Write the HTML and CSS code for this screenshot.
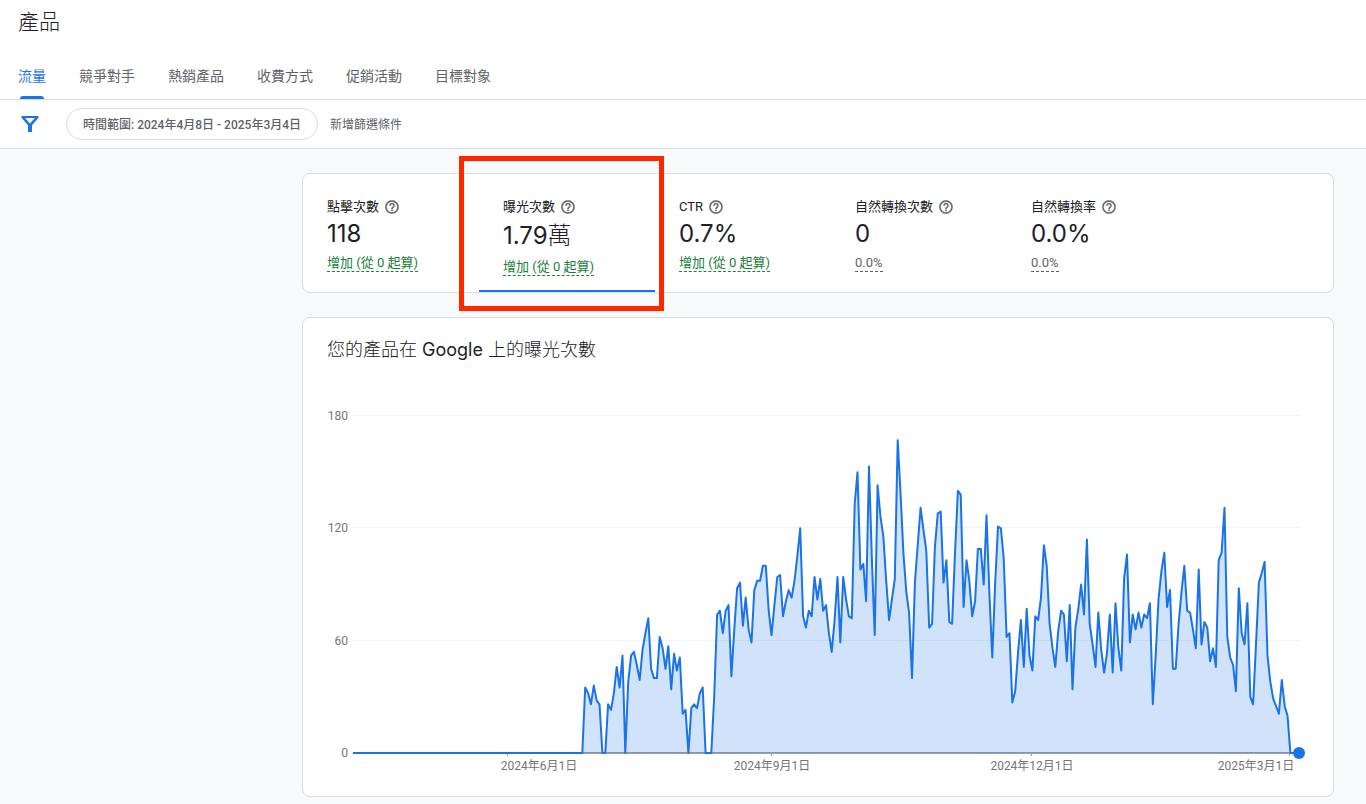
FILE: index.html
```
<!DOCTYPE html>
<html lang="zh-Hant">
<head>
    <meta charset="utf-8">
    <meta name="viewport" content="width=device-width, initial-scale=1">
    <title>產品</title>
    <link rel="stylesheet" href="styles.css">
</head>
<body>
    <svg class="icon-defs" aria-hidden="true">
        <symbol id="help" viewBox="0 0 24 24">
            <path d="M11 18h2v-2h-2v2zm1-16C6.48 2 2 6.48 2 12s4.48 10 10 10 10-4.48 10-10S17.52 2 12 2zm0 18c-4.41 0-8-3.59-8-8s3.59-8 8-8 8 3.59 8 8-3.59 8-8 8zm0-14c-2.21 0-4 1.79-4 4h2c0-1.1.9-2 2-2s2 .9 2 2c0 2-3 1.75-3 5h2c0-2.25 3-2.5 3-5 0-2.21-1.79-4-4-4z"/>
        </symbol>
    </svg>

    <header class="page-header">
        <h1>產品</h1>
        <nav class="tabs">
            <a class="tab active" href="#traffic" aria-current="page">流量</a>
            <a class="tab" href="#competitors">競爭對手</a>
            <a class="tab" href="#popular">熱銷產品</a>
            <a class="tab" href="#pricing">收費方式</a>
            <a class="tab" href="#promotions">促銷活動</a>
            <a class="tab" href="#audience">目標對象</a>
        </nav>
        <div class="filter-bar">
            <svg class="filter-icon" viewBox="0 0 18 18" aria-hidden="true">
                <path fill-rule="evenodd" d="M.5 1h17v1.8L11 10.2V17H7v-6.8L.5 2.8V1zm3.6 2L9 8.6 13.9 3H4.1z"/>
            </svg>
            <button class="chip" type="button">時間範圍: 2024年4月8日 - 2025年3月4日</button>
            <button class="add-filter" type="button">新增篩選條件</button>
        </div>
    </header>

    <main>
        <section class="card metrics">
            <button class="metric" type="button">
                <span class="metric-label">點擊次數 <svg class="help-icon"><use href="#help"/></svg></span>
                <span class="metric-value">118</span>
                <span class="metric-change up">增加 (從 0 起算)</span>
            </button>
            <button class="metric selected" type="button" aria-pressed="true">
                <span class="metric-label">曝光次數 <svg class="help-icon"><use href="#help"/></svg></span>
                <span class="metric-value with-unit">1.79<span class="unit">萬</span></span>
                <span class="metric-change up">增加 (從 0 起算)</span>
                <span class="highlight"></span>
            </button>
            <button class="metric" type="button">
                <span class="metric-label">CTR <svg class="help-icon"><use href="#help"/></svg></span>
                <span class="metric-value">0.7%</span>
                <span class="metric-change up">增加 (從 0 起算)</span>
            </button>
            <button class="metric" type="button">
                <span class="metric-label">自然轉換次數 <svg class="help-icon"><use href="#help"/></svg></span>
                <span class="metric-value">0</span>
                <span class="metric-change">0.0%</span>
            </button>
            <button class="metric" type="button">
                <span class="metric-label">自然轉換率 <svg class="help-icon"><use href="#help"/></svg></span>
                <span class="metric-value">0.0%</span>
                <span class="metric-change">0.0%</span>
            </button>
        </section>

        <section class="card chart-card">
            <h2>您的產品在 <span class="brand">Google</span> 上的曝光次數</h2>
            <svg id="chart" class="chart" role="img" aria-label="曝光次數"></svg>
        </section>
    </main>

    <script src="chart.js"></script>
</body>
</html>
```
FILE: styles.css
```
* {
    box-sizing: border-box;
}
body {
    margin: 0;
    background-color: #f8f9fa;
    color: #202124;
    font-family: Roboto, "Noto Sans CJK TC", sans-serif;
    font-size: 13px;
}
button {
    border: none;
    background: none;
    color: inherit;
    font-family: inherit;
    cursor: pointer;
}
.icon-defs {
    display: none;
}

/* Header */
.page-header {
    background-color: #fff;
}
h1 {
    margin: 0;
    padding: 6px 18px 0;
    font-size: 21px;
    font-weight: 300;
    line-height: 32px;
}
.tabs {
    display: flex;
    gap: 33px;
    margin-top: 14px;
    padding: 0 18px;
    border-bottom: 1px solid #dadce0;
}
.tab {
    display: flex;
    flex-direction: column;
    align-items: center;
    height: 47px;
    color: #5f6368;
    font-size: 14px;
    line-height: 48px;
    text-decoration: none;
}
.tab.active {
    color: #1a73e8;
}
.tab.active::after {
    content: "";
    width: 24px;
    height: 3px;
    margin-top: -4px;
    border-radius: 3px 3px 0 0;
    background-color: #1a73e8;
}
.filter-bar {
    display: flex;
    align-items: center;
    height: 49px;
    padding: 0 21px;
    border-bottom: 1px solid #dadce0;
    color: #5f6368;
}
.filter-icon {
    width: 18px;
    height: 18px;
    margin-right: 27px;
    fill: #1a73e8;
}
.chip {
    height: 32px;
    padding: 0 16px 2px;
    border: 1px solid #dadce0;
    border-radius: 16px;
    font-size: 12px;
    font-weight: 500;
}
.add-filter {
    padding: 0 12px 2px;
    font-size: 12px;
}

/* Cards */
main {
    display: flex;
    flex-direction: column;
    gap: 24px;
    padding: 24px 32px 0 302px;
}
.card {
    border: 1px solid #dadce0;
    border-radius: 8px;
    background-color: #fff;
}
.metrics {
    display: flex;
}
.metric {
    position: relative;
    display: flex;
    flex-direction: column;
    align-items: flex-start;
    flex: 0 1 176px;
    height: 118px;
    padding: 24px 0 0 24px;
    text-align: left;
    white-space: nowrap;
}
.metric.selected {
    border-bottom: 2px solid #1a73e8;
}
.metric-label {
    display: flex;
    align-items: center;
    gap: 5px;
    font-size: 13px;
    line-height: 18px;
}
.help-icon {
    width: 16px;
    height: 16px;
    fill: #5f6368;
    stroke: #5f6368;
    stroke-width: 0.4px;
}
.metric-value {
    font-family: Inter, "Noto Sans CJK TC", sans-serif;
    font-size: 24px;
    line-height: 36px;
}
.metric-value.with-unit {
    line-height: 40px;
}
.unit {
    font-weight: 300;
}
.metric-change {
    margin-top: 2px;
    border-bottom: 1px dashed #5f6368;
    color: #5f6368;
    font-size: 13px;
    line-height: 17px;
}
.metric-change.up {
    border-color: #188038;
    color: #188038;
}
.highlight {
    position: absolute;
    top: -18px;
    right: -9px;
    bottom: -21px;
    left: -20px;
    border: 5px solid #ff2600;
    pointer-events: none;
}

/* Chart */
.chart-card {
    padding: 21px 24px 24px;
}
h2 {
    margin: 0 0 23px;
    font-family: Inter, "Noto Sans CJK TC", sans-serif;
    font-size: 18px;
    font-weight: 300;
    line-height: 22px;
}
.brand {
    font-weight: 400;
}
.chart {
    display: block;
    width: 100%;
    height: 388px;
    overflow: visible;
}
.chart text {
    fill: #757575;
    font-size: 12px;
}
.grid-line {
    stroke: #f1f3f4;
}
.base-line {
    stroke: #9aa0a6;
    stroke-width: 2;
}
.tick {
    stroke: #9aa0a6;
}
.area {
    fill: #1a73e8;
    fill-opacity: 0.2;
}
.line {
    fill: none;
    stroke: #1a73e8;
    stroke-width: 2;
    stroke-linejoin: round;
}
.end-point {
    fill: #1a73e8;
}
```
FILE: chart.js
```
// Daily impressions, 2024-04-08 to 2025-03-04. The first 81 days are all zero.
const values = new Array(81).fill(0).concat([
    35, 32, 26, 36, 28, 26, 0, 0, 26,
    23, 32, 46, 35, 52, 0, 38, 52, 54, 47,
    39, 55, 64, 72, 45, 40, 40, 62, 56, 45,
    57, 34, 53, 44, 51, 21, 23, 0, 24, 26,
    24, 32, 35, 0, 0, 0, 30, 74, 76, 64,
    76, 79, 41, 66, 88, 91, 68, 83, 66, 59,
    87, 92, 92, 100, 100, 76, 63, 79, 94, 95,
    73, 81, 87, 83, 92, 105, 120, 73, 67, 76,
    73, 94, 82, 93, 76, 79, 64, 54, 71, 94,
    59, 94, 82, 73, 72, 133, 150, 98, 101, 81,
    153, 103, 63, 143, 126, 116, 92, 71, 82, 93,
    167, 139, 107, 86, 75, 40, 91, 111, 131, 119,
    108, 67, 69, 110, 128, 129, 91, 103, 70, 69,
    107, 140, 138, 78, 103, 92, 73, 81, 109, 109,
    90, 127, 85, 51, 90, 121, 120, 104, 62, 64,
    27, 33, 54, 71, 46, 77, 52, 44, 73, 71,
    83, 111, 100, 69, 56, 46, 65, 76, 74, 49,
    79, 34, 67, 77, 90, 74, 114, 69, 58, 46,
    75, 55, 43, 53, 74, 43, 80, 56, 44, 93,
    106, 59, 74, 66, 75, 67, 74, 72, 80, 26,
    52, 82, 97, 107, 78, 87, 45, 45, 69, 86,
    100, 76, 75, 66, 56, 98, 58, 70, 67, 49,
    56, 46, 103, 107, 131, 62, 51, 47, 33, 88,
    64, 58, 80, 30, 26, 58, 91, 96, 102, 52,
    38, 29, 25, 21, 39, 25, 20, 0, 0, 0, 0
]);

// labelDay is the day the label is centred on
const ticks = [
    { day: 54, labelDay: 65, text: '2024年6月1日' },
    { day: 146, labelDay: 146, text: '2024年9月1日' },
    { day: 237, labelDay: 237, text: '2024年12月1日' },
    { day: 327, labelDay: 315, text: '2025年3月1日' }
];

const chart = document.getElementById('chart');
const left = 26;
const top180 = 32;
const bottom = 369;

function drawChart() {
    const right = chart.clientWidth - 10;
    const x = day => left + day * (right - left) / (values.length - 1);
    const y = value => bottom - value * (bottom - top180) / 180;
    let svg = '';

    [180, 120, 60, 0].forEach(value => {
        const lineY = Math.round(y(value)) - 0.5;
        if (value > 0) {
            svg += `<line class="grid-line" x1="${left}" x2="${right}" y1="${lineY}" y2="${lineY}"/>`;
        }
        svg += `<text x="21" y="${Math.round(y(value)) + 4}" text-anchor="end">${value}</text>`;
    });

    const points = values.map((value, day) => `${x(day).toFixed(1)},${y(value).toFixed(1)}`).join(' ');
    svg += `<line class="base-line" x1="${left}" x2="${right}" y1="${bottom}" y2="${bottom}"/>`;
    svg += `<polygon class="area" points="${left},${bottom} ${points} ${right},${bottom}"/>`;

    ticks.forEach(tick => {
        const tickX = Math.round(x(tick.day)) - 0.5;
        svg += `<line class="tick" x1="${tickX}" x2="${tickX}" y1="${bottom}" y2="${bottom + 3}"/>`;
        svg += `<text x="${Math.round(x(tick.labelDay))}" y="${bottom + 17}" text-anchor="middle">${tick.text}</text>`;
    });

    svg += `<polyline class="line" points="${points}"/>`;
    svg += `<circle class="end-point" cx="${right}" cy="${bottom}" r="6"/>`;
    chart.innerHTML = svg;
}

drawChart();
window.addEventListener('resize', drawChart);
```
